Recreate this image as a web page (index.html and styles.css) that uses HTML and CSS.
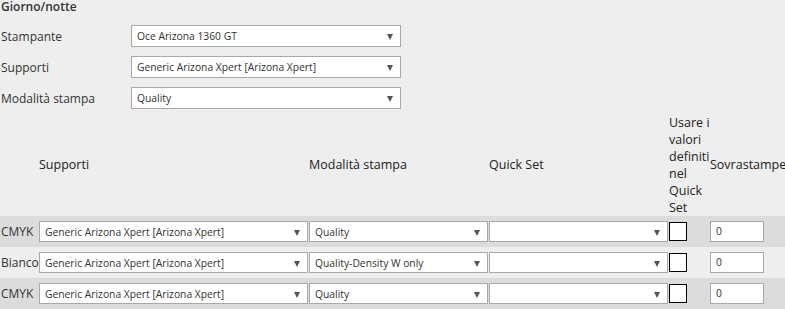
FILE: index.html
```html
<!DOCTYPE html>
<html lang="it">
<head>
<meta charset="utf-8">
<title>Giorno/notte</title>
<link rel="stylesheet" href="styles.css">
</head>
<body>
<div class="page">
  <div class="title">Giorno/notte</div>
  <div class="form">
    <div class="form-row">
      <label class="form-label">Stampante</label>
      <div class="sel sel-top"><span class="sel-text">Oce Arizona 1360 GT</span><span class="arrow"></span></div>
    </div>
    <div class="form-row">
      <label class="form-label">Supporti</label>
      <div class="sel sel-top"><span class="sel-text">Generic Arizona Xpert [Arizona Xpert]</span><span class="arrow"></span></div>
    </div>
    <div class="form-row">
      <label class="form-label">Modalità stampa</label>
      <div class="sel sel-top"><span class="sel-text">Quality</span><span class="arrow"></span></div>
    </div>
  </div>

  <table class="grid">
    <colgroup>
      <col class="c-name"><col class="c-sup"><col class="c-mod"><col class="c-qs"><col class="c-use"><col class="c-ovr">
    </colgroup>
    <thead>
      <tr>
        <th></th>
        <th>Supporti</th>
        <th>Modalità stampa</th>
        <th>Quick Set</th>
        <th class="th-use">Usare i valori definiti nel Quick Set</th>
        <th>Sovrastampe</th>
      </tr>
    </thead>
    <tbody>
      <tr class="odd">
        <td class="name">CMYK</td>
        <td><div class="sel sel-sup"><span class="sel-text">Generic Arizona Xpert [Arizona Xpert]</span><span class="arrow"></span></div></td>
        <td><div class="sel sel-mod"><span class="sel-text">Quality</span><span class="arrow"></span></div></td>
        <td><div class="sel sel-qs"><span class="sel-text"></span><span class="arrow"></span></div></td>
        <td><span class="check"></span></td>
        <td><div class="num">0</div></td>
      </tr>
      <tr class="even">
        <td class="name">Bianco</td>
        <td><div class="sel sel-sup"><span class="sel-text">Generic Arizona Xpert [Arizona Xpert]</span><span class="arrow"></span></div></td>
        <td><div class="sel sel-mod"><span class="sel-text">Quality-Density W only</span><span class="arrow"></span></div></td>
        <td><div class="sel sel-qs"><span class="sel-text"></span><span class="arrow"></span></div></td>
        <td><span class="check"></span></td>
        <td><div class="num">0</div></td>
      </tr>
      <tr class="odd">
        <td class="name">CMYK</td>
        <td><div class="sel sel-sup"><span class="sel-text">Generic Arizona Xpert [Arizona Xpert]</span><span class="arrow"></span></div></td>
        <td><div class="sel sel-mod"><span class="sel-text">Quality</span><span class="arrow"></span></div></td>
        <td><div class="sel sel-qs"><span class="sel-text"></span><span class="arrow"></span></div></td>
        <td><span class="check"></span></td>
        <td><div class="num">0</div></td>
      </tr>
    </tbody>
  </table>
</div>
</body>
</html>
```

FILE: styles.css
```css
* { box-sizing: border-box; }
html, body {
  margin: 0;
  padding: 0;
  background: #eeeeee;
}
body {
  font-family: "Open Sans", "Noto Sans", sans-serif;
  font-size: 12px;
  color: #333333;
  width: 785px;
  height: 309px;
  overflow: hidden;
}
.page {
  padding-left: 1px;
}
.title {
  height: 17px;
  line-height: 14px;
  font-weight: 600;
  color: #333;
}
.form {
  display: flex;
  flex-direction: column;
  gap: 9px;
  margin-top: 8px;
}
.form-row {
  display: flex;
  align-items: center;
  height: 22px;
}
.form-label {
  width: 130px;
  flex: none;
}
.sel {
  position: relative;
  display: flex;
  align-items: center;
  background: #fff;
  border: 1px solid #a9a9a9;
  font-size: 10.3px;
  color: #333;
  padding-left: 5px;
}
.sel-top {
  width: 270px;
  height: 22px;
}
.sel-text { white-space: nowrap; }
.arrow {
  position: absolute;
  right: 7px;
  top: 50%;
  margin-top: -2px;
  width: 0;
  height: 0;
  border-left: 3.5px solid transparent;
  border-right: 3.5px solid transparent;
  border-top: 6px solid #555;
}
.grid {
  border-collapse: collapse;
  margin-top: 4px;
  margin-left: -1px;
  width: 785px;
  table-layout: fixed;
}
.c-name { width: 39px; }
.c-sup { width: 270px; }
.c-mod { width: 180px; }
.c-qs { width: 180px; }
.c-use { width: 41px; }
.c-ovr { width: 75px; }
.grid th {
  text-align: left;
  font-weight: normal;
  font-size: 12.5px;
  line-height: 17px;
  padding: 0;
  vertical-align: middle;
  color: #222;
  height: 103px;
  white-space: normal;
}
.grid th.th-use {
  overflow: visible;
}
.grid td {
  padding: 0;
  height: 31px;
  vertical-align: middle;
}
.grid tr.odd td { background: #dcdcdc; }
.grid td.name { padding-left: 1px; font-size: 12px; }
.sel-sup, .sel-mod, .sel-qs {
  height: 21px;
  width: calc(100% - 1px);
}
.check {
  display: block;
  width: 18px;
  height: 19px;
  border: 1.5px solid #000;
  background: #fff;
}
.num {
  width: 54px;
  height: 21px;
  background: #fff;
  border: 1px solid #a9a9a9;
  font-size: 10.3px;
  padding-left: 5px;
  line-height: 19px;
}
```
